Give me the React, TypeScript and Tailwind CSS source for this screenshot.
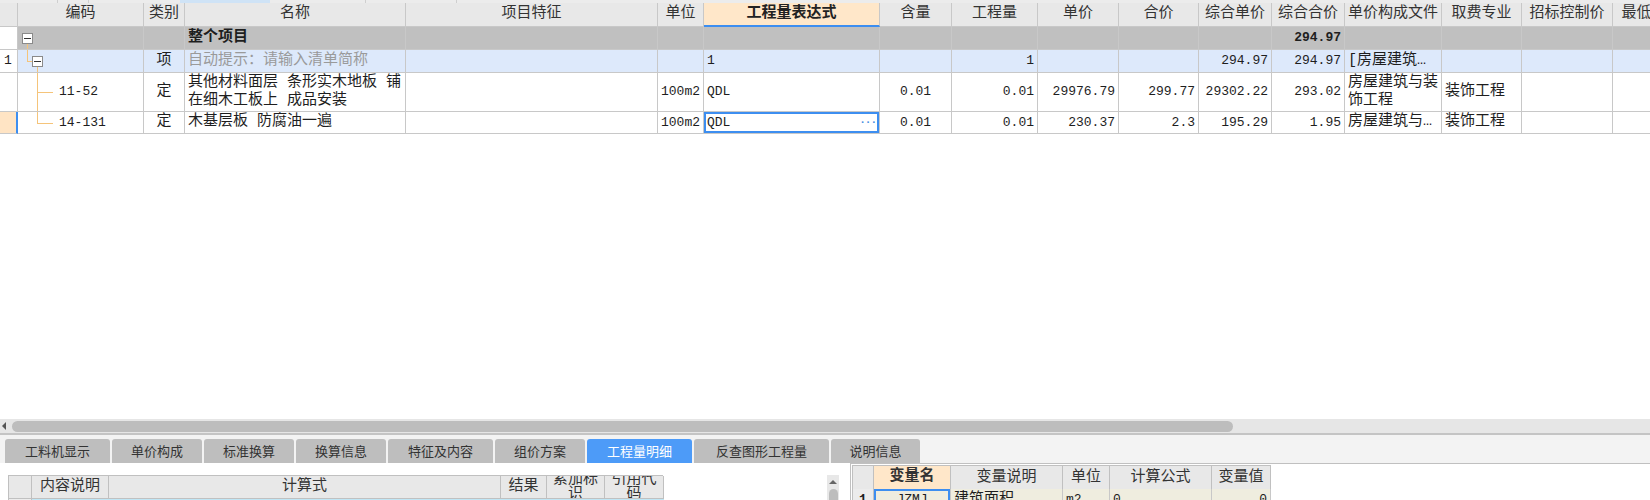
import React from 'react';

const mainCols =
  'grid w-[1673px] grid-cols-[18px_126px_41px_221px_252px_46px_176px_72px_86px_81px_80px_73px_73px_97px_80px_91px_78px]';

const headers = [
  '', '编码', '类别', '名称', '项目特征', '单位', '工程量表达式', '含量', '工程量',
  '单价', '合价', '综合单价', '综合合价', '单价构成文件', '取费专业', '招标控制价', '最低限价',
];

function Cell({ children, className = '' }: { children?: React.ReactNode; className?: string }) {
  return (
    <div
      className={`relative flex items-center overflow-hidden whitespace-nowrap border-r border-b border-[#c8c8c8] ${className}`}
    >
      {children}
    </div>
  );
}

// tree toggle box
function MinusBox({ className = '' }: { className?: string }) {
  return (
    <span
      className={`flex h-[11px] w-[11px] shrink-0 items-center justify-center border border-[#8a8a8a] bg-white ${className}`}
    >
      <span className="h-px w-[7px] bg-[#333]" />
    </span>
  );
}

const num = 'justify-end pr-[3px] text-[13px]';
const cn = 'pl-[3px] text-[15px]';
const line = 'absolute bg-[#f5c47a]';

function TopStrip() {
  return (
    <div className="relative h-[3px] shrink-0 bg-[#ececec]">
      <span className="absolute left-[57px] top-0 h-full w-px bg-[#cfcfcf]" />
      <span className="absolute left-[88px] top-0 h-full w-px bg-[#cfcfcf]" />
      <span className="absolute left-[180px] top-0 h-full w-[90px] bg-[#cfe3f6]" />
      <span className="absolute left-[365px] top-0 h-full w-px bg-[#cfcfcf]" />
      <span className="absolute left-[456px] top-0 h-full w-px bg-[#cfcfcf]" />
    </div>
  );
}

function MainTable() {
  return (
    <div className="w-[1650px] overflow-hidden">
      {/* header */}
      <div className={`${mainCols} h-[24px]`}>
        {headers.map((h, i) =>
          i === 6 ? (
            <Cell
              key={i}
              className="justify-center border-b-2 border-b-[#3d8ef0] bg-[#ffe7c9] text-[15px] font-bold text-[#222]"
            >
              {h}
            </Cell>
          ) : (
            <Cell key={i} className="justify-center bg-[#e8e8e8] text-[15px] text-[#333]">
              {h}
            </Cell>
          )
        )}
      </div>

      {/* 整个项目 */}
      <div className={`${mainCols} h-[23px] bg-[#c0c0c0]`}>
        <Cell className="bg-white" />
        <Cell>
          <MinusBox className="ml-[4px]" />
          <span className={`${line} left-[9px] top-[17px] bottom-0 w-px`} />
        </Cell>
        <Cell />
        <Cell className={`${cn} font-bold`}>整个项目</Cell>
        <Cell />
        <Cell />
        <Cell />
        <Cell />
        <Cell />
        <Cell />
        <Cell />
        <Cell />
        <Cell className={`${num} font-bold`}>294.97</Cell>
        <Cell />
        <Cell />
        <Cell />
        <Cell />
      </div>

      {/* 清单行 */}
      <div className={`${mainCols} h-[23px] bg-[#dde9fb]`}>
        <Cell className="bg-white pl-[4px] text-[13px]">1</Cell>
        <Cell>
          <span className={`${line} left-[9px] top-0 h-[12px] w-px`} />
          <span className={`${line} left-[9px] top-[11px] h-px w-[5px]`} />
          <MinusBox className="ml-[14px]" />
          <span className={`${line} left-[19px] top-[17px] bottom-0 w-px`} />
        </Cell>
        <Cell className="justify-center text-[15px]">项</Cell>
        <Cell className={`${cn} text-[#9a9a9a]`}>自动提示：请输入清单简称</Cell>
        <Cell />
        <Cell />
        <Cell className="pl-[3px] text-[13px]">1</Cell>
        <Cell />
        <Cell className={num}>1</Cell>
        <Cell />
        <Cell />
        <Cell className={num}>294.97</Cell>
        <Cell className={num}>294.97</Cell>
        <Cell className={cn}>[房屋建筑…</Cell>
        <Cell />
        <Cell />
        <Cell />
      </div>

      {/* 11-52 */}
      <div className={`${mainCols} h-[39px]`}>
        <Cell />
        <Cell className="text-[13px]">
          <span className={`${line} left-[19px] top-0 bottom-0 w-px`} />
          <span className={`${line} left-[19px] top-[19px] h-px w-[16px]`} />
          <span className="ml-[41px]">11-52</span>
        </Cell>
        <Cell className="justify-center text-[15px]">定</Cell>
        <Cell className={`${cn} leading-[18px]`}>
          其他材料面层 条形实木地板 铺
          <br />
          在细木工板上 成品安装
        </Cell>
        <Cell />
        <Cell className={num}>100m2</Cell>
        <Cell className="pl-[3px] text-[13px]">QDL</Cell>
        <Cell className="justify-center text-[13px]">0.01</Cell>
        <Cell className={num}>0.01</Cell>
        <Cell className={num}>29976.79</Cell>
        <Cell className={num}>299.77</Cell>
        <Cell className={num}>29302.22</Cell>
        <Cell className={num}>293.02</Cell>
        <Cell className={`${cn} leading-[18px]`}>
          房屋建筑与装
          <br />
          饰工程
        </Cell>
        <Cell className={cn}>装饰工程</Cell>
        <Cell />
        <Cell />
      </div>

      {/* 14-131 */}
      <div className={`${mainCols} h-[22px]`}>
        <Cell className="border-r-2 border-r-[#3d8ef0] bg-[#ffe4c4]" />
        <Cell className="text-[13px]">
          <span className={`${line} left-[19px] top-0 h-[12px] w-px`} />
          <span className={`${line} left-[19px] top-[11px] h-px w-[16px]`} />
          <span className="ml-[41px]">14-131</span>
        </Cell>
        <Cell className="justify-center text-[15px]">定</Cell>
        <Cell className={cn}>木基层板 防腐油一遍</Cell>
        <Cell />
        <Cell className={num}>100m2</Cell>
        <Cell className="justify-between px-[3px] text-[13px] ring-2 ring-inset ring-[#3d8ef0]">
          <span>QDL</span>
          <span className="text-[11px] font-bold tracking-[-1px] text-[#4a90e2]">···</span>
        </Cell>
        <Cell className="justify-center text-[13px]">0.01</Cell>
        <Cell className={num}>0.01</Cell>
        <Cell className={num}>230.37</Cell>
        <Cell className={num}>2.3</Cell>
        <Cell className={num}>195.29</Cell>
        <Cell className={num}>1.95</Cell>
        <Cell className={cn}>房屋建筑与…</Cell>
        <Cell className={cn}>装饰工程</Cell>
        <Cell />
        <Cell />
      </div>
    </div>
  );
}

const tabs = [
  { label: '工料机显示', w: 'w-[105px]' },
  { label: '单价构成', w: 'w-[90px]' },
  { label: '标准换算', w: 'w-[90px]' },
  { label: '换算信息', w: 'w-[90px]' },
  { label: '特征及内容', w: 'w-[105px]' },
  { label: '组价方案', w: 'w-[90px]' },
  { label: '工程量明细', w: 'w-[105px]', active: true },
  { label: '反查图形工程量', w: 'w-[135px]' },
  { label: '说明信息', w: 'w-[89px]' },
];

function HScrollbar() {
  return (
    <>
      <div className="flex h-[14px] shrink-0 items-center bg-[#e6e6e6]">
        <span className="ml-[2px] h-0 w-0 border-y-[4px] border-r-[4px] border-y-transparent border-r-[#555]" />
        <span className="ml-[6px] h-[11px] w-[1221px] rounded-full bg-[#bdbdbd]" />
      </div>
      <div className="h-[2px] shrink-0 bg-[#c4c4c4]" />
    </>
  );
}

function DetailTable() {
  const cols = 'grid grid-cols-[23px_77px_392px_46px_58px_59px]';
  const hd = 'flex items-center justify-center overflow-hidden border-r border-b border-[#c0c0c0] bg-[#e8e8e8] text-[15px] text-[#333]';
  return (
    <div className="w-[655px] border-l border-t border-[#c0c0c0]">
      <div className={`${cols} h-[23px]`}>
        <div className={hd} />
        <div className={hd}>内容说明</div>
        <div className={hd}>计算式</div>
        <div className={hd}>结果</div>
        <div className={`${hd} text-center leading-[15px]`}>累加标识</div>
        <div className={`${hd} text-center leading-[15px]`}>引用代码</div>
      </div>
      <div className={`${cols} h-[23px]`}>
        <div className="border-r border-[#c0c0c0] bg-[#ececec]" />
        <div className="col-span-5 border-t border-[#bfe6f5] bg-[#f4fbfe]" />
      </div>
    </div>
  );
}

function VarTable() {
  const cols = 'grid grid-cols-[21px_77px_112px_47px_102px_59px]';
  const hd = 'flex items-center justify-center border-r border-b border-[#c0c0c0] bg-[#e8e8e8] text-[15px] text-[#333]';
  const td = 'flex items-center overflow-hidden whitespace-nowrap border-r border-b border-[#c8c8c8] bg-[#efeddf] text-[13px]';
  return (
    <div className="w-[419px] border-l border-t border-[#c0c0c0]">
      <div className={`${cols} h-[23px]`}>
        <div className={hd} />
        <div className={`${hd} border-b-2 border-b-[#3d8ef0] bg-[#ffe7c9] font-bold text-[#222]`}>变量名</div>
        <div className={hd}>变量说明</div>
        <div className={hd}>单位</div>
        <div className={hd}>计算公式</div>
        <div className={hd}>变量值</div>
      </div>
      <div className={`${cols} h-[23px]`}>
        <div className="flex items-center justify-center border-r border-b border-[#c0c0c0] bg-[#ececec] text-[13px] font-bold">
          1
        </div>
        <div className={`${td} justify-center ring-2 ring-inset ring-[#3d8ef0]`}>JZMJ</div>
        <div className={`${td} pl-[3px] text-[15px]`}>建筑面积</div>
        <div className={`${td} pl-[3px]`}>m2</div>
        <div className={`${td} pl-[3px]`}>0</div>
        <div className={`${td} justify-end pr-[3px]`}>0</div>
      </div>
    </div>
  );
}

export default function App() {
  return (
    <div className="flex h-[500px] w-[1650px] flex-col overflow-hidden bg-white font-['Liberation_Mono','Noto_Sans_CJK_SC',monospace] text-[#1e1e1e]">
      {/* 上半部分：清单/定额表格 */}
      <div className="flex h-[419px] shrink-0 flex-col overflow-hidden">
        <TopStrip />
        <MainTable />
      </div>

      <HScrollbar />

      {/* 下半部分：属性页签 */}
      <div className="flex flex-1 flex-col bg-[#f3f3f3]">
        <div className="flex h-[28px] shrink-0 items-end gap-[2px] pl-[5px]">
          {tabs.map((t) => (
            <div
              key={t.label}
              className={`flex h-[24px] items-center justify-center rounded-t-[3px] font-['Noto_Sans_CJK_SC',sans-serif] text-[13px] ${t.w} ${
                t.active ? 'bg-[#4d9bf8] text-white' : 'bg-[#bebebe] text-[#333]'
              }`}
            >
              {t.label}
            </div>
          ))}
        </div>

        <div className="flex flex-1 overflow-hidden">
          {/* 工程量明细 */}
          <div className="flex w-[850px] shrink-0 items-start bg-white pt-[12px]">
            <div className="ml-[8px]">
              <DetailTable />
            </div>
            <div className="ml-[164px] flex h-[40px] w-[12px] flex-col items-center bg-[#e8e8e8]">
              <span className="mt-[5px] h-0 w-0 border-x-[4px] border-b-[4px] border-x-transparent border-b-[#666]" />
              <span className="mt-[5px] h-[30px] w-[9px] rounded-full bg-[#bdbdbd]" />
            </div>
          </div>

          {/* 变量表 */}
          <div className="flex-1 border-l border-t border-[#c0c0c0] bg-white pl-px pt-px">
            <VarTable />
          </div>
        </div>
      </div>
    </div>
  );
}
